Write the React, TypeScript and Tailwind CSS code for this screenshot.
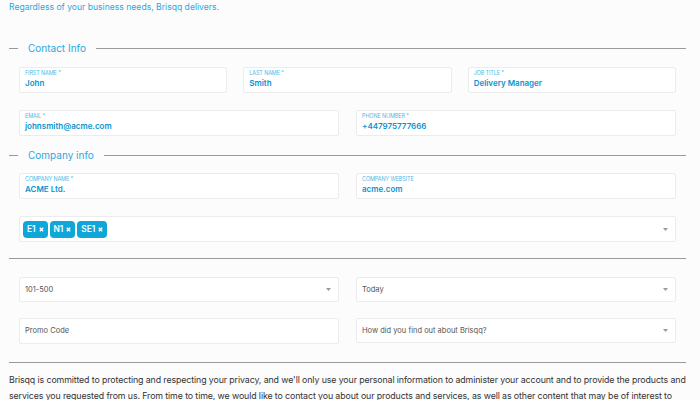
import React from 'react';

const font = { fontFamily: 'Inter, "Open Sans", sans-serif' };

function Legend({ title }: { title: string }) {
  return (
    <div className="flex items-center h-[14px]">
      <div className="w-[9px] h-px bg-[#9a9a9a]" />
      <span className="px-[10px] text-[10px] leading-[14px] text-[#2aa9df]">{title}</span>
      <div className="flex-1 h-px bg-[#9a9a9a]" />
    </div>
  );
}

function Field({ label, value, className = '' }: { label: string; value: string; className?: string }) {
  return (
    <div className={`h-[26px] bg-white border border-[#ececec] rounded-[2px] px-[5px] pt-[2px] ${className}`}>
      <div className="text-[5.5px] leading-[7px] uppercase text-[#4fb9e6] tracking-tight">{label}</div>
      <div className="text-[8px] leading-[12px] font-semibold text-[#0a93cf]">{value}</div>
    </div>
  );
}

function Caret() {
  return (
    <svg width="5" height="3" viewBox="0 0 5 3" className="shrink-0">
      <path d="M0 0h5L2.5 3z" fill="#999" />
    </svg>
  );
}

function Select({ text }: { text: string }) {
  return (
    <div className="h-[25px] bg-white border border-[#ececec] rounded-[2px] pl-[5px] pr-[7px] flex items-center justify-between">
      <span className="text-[7.5px] text-[#555]">{text}</span>
      <Caret />
    </div>
  );
}

function Tag({ label }: { label: string }) {
  return (
    <span className="inline-flex items-center gap-[3px] h-[17px] px-[4px] rounded-[4px] bg-[#0ea7da] text-white text-[8.3px] font-semibold">
      {label}
      <svg width="5" height="5" viewBox="0 0 5 5">
        <path d="M0.8 0.8L4.2 4.2M4.2 0.8L0.8 4.2" stroke="white" strokeWidth="1.4" />
      </svg>
    </span>
  );
}

export default function App() {
  return (
    <div className="w-[700px] h-[400px] overflow-hidden bg-[#fcfcfc] pl-[9px] pr-[14px]" style={font}>
      <p className="text-[8.6px] leading-[14px] text-[#2aa9df]">Regardless of your business needs, Brisqq delivers.</p>

      <div className="mt-[27px]">
        <Legend title="Contact Info" />
      </div>
      <div className="px-[10px]">
        <div className="grid grid-cols-3 gap-[16px] mt-[12px]">
          <Field label="First name *" value="John" />
          <Field label="Last name *" value="Smith" />
          <Field label="Job title *" value="Delivery Manager" />
        </div>
        <div className="grid grid-cols-2 gap-[17px] mt-[17px]">
          <Field label="Email *" value="johnsmith@acme.com" />
          <Field label="Phone number *" value="+447975777666" />
        </div>
      </div>

      <div className="mt-[12px]">
        <Legend title="Company info" />
      </div>
      <div className="px-[10px]">
        <div className="grid grid-cols-2 gap-[17px] mt-[11px]">
          <Field label="Company name *" value="ACME Ltd." />
          <Field label="Company website" value="acme.com" />
        </div>
        <div className="mt-[17px] h-[26px] bg-white border border-[#ececec] rounded-[2px] pl-[3px] pr-[7px] flex items-center justify-between">
          <div className="flex gap-[2px]">
            <Tag label="E1" />
            <Tag label="N1" />
            <Tag label="SE1" />
          </div>
          <Caret />
        </div>
      </div>

      <div className="mt-[16px] h-px bg-[#9a9a9a]" />

      <div className="px-[10px]">
        <div className="grid grid-cols-2 gap-[17px] mt-[18px]">
          <Select text="101-500" />
          <Select text="Today" />
        </div>
        <div className="grid grid-cols-2 gap-[17px] mt-[16px]">
          <div className="h-[26px] bg-white border border-[#ececec] rounded-[2px] px-[5px] flex items-center">
            <span className="text-[7.5px] text-[#555]">Promo Code</span>
          </div>
          <Select text="How did you find out about Brisqq?" />
        </div>
      </div>

      <div className="mt-[18px] h-px bg-[#9a9a9a]" />

      <p className="mt-[9px] text-[8.8px] leading-[16px] tracking-[-0.1px] text-[#333]">
        Brisqq is committed to protecting and respecting your privacy, and we'll only use your personal information to administer your account and to provide the products and services you requested from us. From time to time, we would like to contact you about our products and services, as well as other content that may be of interest to you.
      </p>
    </div>
  );
}
